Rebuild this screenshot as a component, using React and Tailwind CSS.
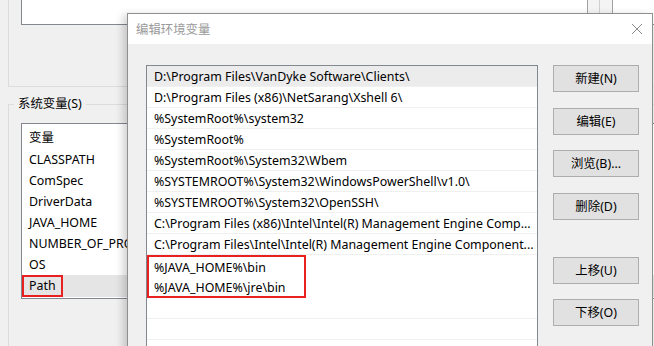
import React from "react";

const font = { fontFamily: '"Noto Sans", "Noto Sans CJK SC", sans-serif' };

const leftRows = ["CLASSPATH", "ComSpec", "DriverData", "JAVA_HOME", "NUMBER_OF_PROCESSORS", "OS"];

const pathRows = [
  "D:\\Program Files\\VanDyke Software\\Clients\\",
  "D:\\Program Files (x86)\\NetSarang\\Xshell 6\\",
  "%SystemRoot%\\system32",
  "%SystemRoot%",
  "%SystemRoot%\\System32\\Wbem",
  "%SYSTEMROOT%\\System32\\WindowsPowerShell\\v1.0\\",
  "%SYSTEMROOT%\\System32\\OpenSSH\\",
  "C:\\Program Files (x86)\\Intel\\Intel(R) Management Engine Comp...",
  "C:\\Program Files\\Intel\\Intel(R) Management Engine Component...",
];

function Btn({ label, className = "" }) {
  return (
    <div className={`w-[86px] h-[27px] border border-[#adadad] bg-[#e1e1e1] flex items-center justify-center leading-[16px] text-black ${className}`}>
      {label}
    </div>
  );
}

export default function App() {
  return (
    <div className="relative w-[654px] h-[346px] overflow-hidden bg-[#f0f0f0] text-[12.4px] text-black" style={font}>
      {/* background window: user variables group */}
      <div className="ml-[8px] h-[87px] border-l border-b border-[#dcdcdc] flex flex-col">
        <div className="ml-[12px] w-[700px] h-[25px] bg-white border-l border-b border-[#828790]" />
      </div>
      {/* system variables group */}
      <div className="relative ml-[8px] mt-[17px] h-[300px] border-l border-t border-[#dcdcdc]">
        <div className="absolute left-[5px] top-[-10px] px-[4px] bg-[#f0f0f0] leading-[18px]">系统变量(S)</div>
        <div className="ml-[12px] mt-[18px] w-[700px] h-[176px] bg-white border border-[#828790] flex flex-col overflow-hidden">
          <div className="h-[25px] shrink-0 pl-[7px] pt-[2px] flex items-center leading-[18px]">变量</div>
          {leftRows.map((r) => (
            <div key={r} className="h-[21px] shrink-0 pl-[7px] pt-[1px] flex items-center whitespace-nowrap leading-[18px]">{r}</div>
          ))}
          <div className="h-[22px] shrink-0 w-[700px] bg-[#e5e5e5] flex items-center">
            <div className="h-[22px] w-[41px] border-2 border-[#e8201f] flex items-center pl-[5px] leading-[18px]">Path</div>
          </div>
        </div>
      </div>

      {/* behind-window scrollbar fragment */}
      <div className="absolute left-[587px] top-0 w-[26px] h-[13px] border-l border-r border-[#a0a0a0] bg-[#f4f4f4]">
        <div className="ml-[11px] h-full border-l border-[#d0d0d0]" />
      </div>

      {/* dialog */}
      <div className="absolute left-[127px] top-[13px] w-[526px] h-[360px] bg-[#f0f0f0] border border-[#8f8f8f] shadow-[-4px_2px_8px_rgba(0,0,0,0.18)] flex flex-col">
        <div className="h-[30px] bg-white flex items-center justify-between pl-[8px] pr-[9px]">
          <span className="text-[#9a9a9a] leading-[18px] pt-[1px]">编辑环境变量</span>
          <svg width="12" height="12" viewBox="0 0 12 12">
            <path d="M1 1 L11 11 M11 1 L1 11" stroke="#8a8a8a" strokeWidth="1" />
          </svg>
        </div>
        <div className="flex pl-[18px] pt-[21px]">
          <div className="w-[392px] h-[300px] bg-white border border-[#828790] flex flex-col overflow-hidden">
            {pathRows.map((r, i) => (
              <div
                key={i}
                className={`h-[21px] shrink-0 pl-[7px] pt-[2px] flex items-center whitespace-nowrap overflow-hidden leading-[18px] border-b border-[#f0f0f0] ${i === 0 ? "bg-[#ececec]" : ""}`}
              >
                {r}
              </div>
            ))}
            <div className="w-[159px] h-[43px] shrink-0 border-2 border-[#e8201f] flex flex-col">
              <div className="h-[20px] pl-[5px] pt-[2px] flex items-center whitespace-nowrap leading-[18px]">%JAVA_HOME%\bin</div>
              <div className="h-[20px] pl-[5px] pt-[2px] flex items-center whitespace-nowrap leading-[18px]">%JAVA_HOME%\jre\bin</div>
            </div>
            <div className="h-[21px] shrink-0 border-b border-[#f0f0f0]" />
            <div className="h-[21px] shrink-0 border-b border-[#f0f0f0]" />
            <div className="h-[21px] shrink-0 border-b border-[#f0f0f0]" />
          </div>
          <div className="ml-[15px] flex flex-col">
            <Btn label="新建(N)" />
            <Btn label="编辑(E)" className="mt-[16px]" />
            <Btn label="浏览(B)..." className="mt-[15px]" />
            <Btn label="删除(D)" className="mt-[16px]" />
            <Btn label="上移(U)" className="mt-[37px]" />
            <Btn label="下移(O)" className="mt-[15px]" />
          </div>
        </div>
      </div>
    </div>
  );
}
